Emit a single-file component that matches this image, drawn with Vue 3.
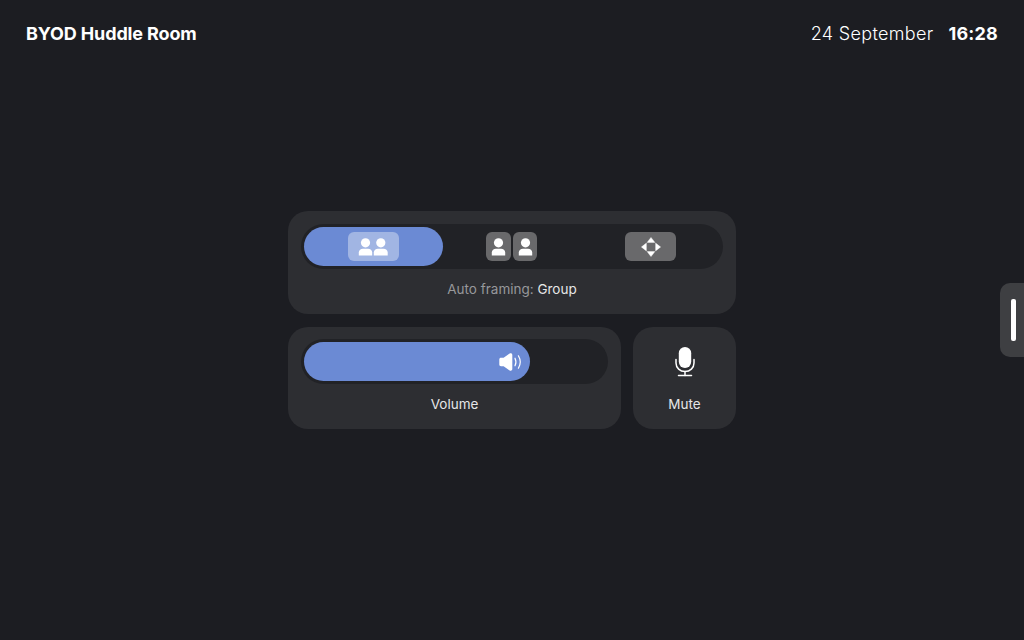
<script setup>
const modes = [
  { id: 'group', active: true },
  { id: 'speakers', active: false },
  { id: 'manual', active: false },
]
const volume = 75
</script>

<template>
  <div class="page">
    <header class="topbar">
      <div class="room">BYOD Huddle Room</div>
      <div class="clock">
        <span class="date">24 September</span>
        <span class="time">16:28</span>
      </div>
    </header>

    <main class="center">
      <div class="panel">
        <section class="card framing">
          <div class="track modes">
            <div v-for="m in modes" :key="m.id" class="mode" :class="{ on: m.active }">
              <div v-if="m.id === 'group'" class="chip wide">
                <svg width="30" height="18" viewBox="0 0 30 18">
                  <g fill="#fff">
                    <circle cx="7.500" cy="4.800" r="4.600" />
                    <path d="M.8 17.500v-3c0-2.300 1.900-3.800 4.200-3.800h5c2.300 0 4.200 1.500 4.200 3.800v3z" />
                    <circle cx="22.800" cy="4.800" r="4.600" />
                    <path d="M15.800 17.500v-3c0-2.300 1.900-3.800 4.200-3.800h5.500c2.300 0 4.200 1.500 4.200 3.800v3z" />
                  </g>
                </svg>
              </div>
              <div v-else-if="m.id === 'speakers'" class="pair">
                <div v-for="n in 2" :key="n" class="chip single">
                  <svg width="15" height="18" viewBox="0 0 15 18">
                    <g fill="#fff">
                      <circle cx="7.500" cy="4.800" r="4.600" />
                      <path d="M.8 17.500v-3c0-2.300 1.900-3.800 4.200-3.800h5c2.300 0 4.200 1.500 4.200 3.800v3z" />
                    </g>
                  </svg>
                </div>
              </div>
              <div v-else class="chip wide">
                <svg width="20" height="20" viewBox="0 0 20 20">
                  <g fill="#fff" stroke="#fff" stroke-width=".4" stroke-linejoin="round">
                    <path d="M10 .4 13.900 5.400H6.100z" />
                    <path d="M10 19.600 6.100 14.600h7.800z" />
                    <path d="M.4 10 5.400 6.100v7.800z" />
                    <path d="M19.600 10 14.600 13.900V6.100z" />
                  </g>
                </svg>
              </div>
            </div>
          </div>
          <div class="label">
            <span class="muted">Auto framing:</span> <span>Group</span>
          </div>
        </section>

        <section class="card volume">
          <div class="track">
            <div class="fill" :style="{ width: volume + '%' }">
              <svg width="24" height="20" viewBox="0 0 24 20">
                <path fill="#fff" d="M.3 7.400c0-1 .7-1.700 1.700-1.700h2.600l6-4.100c1.200-.8 2.700-.2 2.700 1.300v14.200c0 1.500-1.500 2.100-2.700 1.300l-6-4.100H2c-1 0-1.700-.7-1.700-1.700z" />
                <g fill="none" stroke="#fff" stroke-width="1.200" stroke-linecap="round">
                  <path d="M16 6.200c1.200 2.400 1.200 5.200 0 7.600" />
                  <path d="M19.400 3.800c2.300 3.800 2.300 8.600 0 12.400" />
                </g>
              </svg>
            </div>
          </div>
          <div class="label">Volume</div>
        </section>

        <section class="card mute">
          <svg class="mic" width="22" height="30" viewBox="0 0 22 30">
            <rect x="4.800" y="0" width="12.400" height="21" rx="6.200" fill="#fff" />
            <g fill="none" stroke="#fff" stroke-width="1.500" stroke-linecap="round">
              <path d="M2 12.500v3.500c0 5 4 8.500 9 8.500s9-3.500 9-8.500v-3.500" />
              <path d="M11 24.500v4" />
              <path d="M4.500 28.500h13" />
            </g>
          </svg>
          <div class="label">Mute</div>
        </section>
      </div>
    </main>

    <div class="handle"><span class="grip"></span></div>
  </div>
</template>

<style>
html,
body {
  margin: 0;
  background: #1c1d22;
}
</style>

<style scoped>
.page {
  position: relative;
  width: 1024px;
  height: 640px;
  overflow: hidden;
  background: #1c1d22;
  color: #fff;
  font-family: Inter, "Liberation Sans", sans-serif;
  display: grid;
  grid-template-rows: 66px 1fr 66px;
}
.topbar {
  display: flex;
  align-items: center;
  justify-content: space-between;
  padding: 0 26px;
}
.room {
  font-size: 18px;
  font-weight: 700;
  letter-spacing: -0.13px;
}
.clock {
  display: flex;
  gap: 15px;
  font-size: 18px;
}
.date {
  font-weight: 300;
  color: #fff;
  letter-spacing: 0.33px;
}
.time {
  font-weight: 700;
  letter-spacing: 0.2px;
}
.center {
  grid-row: 2;
  display: flex;
  align-items: center;
  justify-content: center;
}
.panel {
  width: 448px;
  display: grid;
  grid-template-columns: 333px 103px;
  grid-template-rows: 103px 102px;
  column-gap: 12px;
  row-gap: 13px;
}
.card {
  background: #2d2e32;
  border-radius: 20px;
  box-sizing: border-box;
  padding: 13px 13px 0;
  display: flex;
  flex-direction: column;
}
.framing {
  grid-column: 1 / 3;
}
.track {
  height: 45px;
  box-sizing: border-box;
  padding: 3px;
  border-radius: 23px;
  background: #212226;
  flex: none;
}
.volume {
  padding-top: 12px;
}
.modes {
  display: grid;
  grid-template-columns: repeat(3, 1fr);
}
.mode {
  display: flex;
  align-items: center;
  justify-content: center;
  border-radius: 20px;
}
.mode.on {
  background: #6b8ad4;
}
.chip {
  height: 29px;
  display: flex;
  align-items: center;
  justify-content: center;
  border-radius: 6px;
  background: #69696b;
}
.chip.wide {
  width: 51px;
}
.mode.on .chip {
  background: #a1b5e3;
}
.pair {
  display: flex;
  gap: 2px;
}
.chip.single {
  width: 24.5px;
}
.label {
  margin-top: 11px;
  text-align: center;
  font-size: 13.5px;
  line-height: 18px;
  color: #e6e6e7;
}
.muted {
  color: #97989b;
}
.fill {
  height: 39px;
  border-radius: 20px;
  background: #6b8ad4;
  box-sizing: border-box;
  display: flex;
  align-items: center;
  justify-content: flex-end;
  padding-right: 7px;
}
.mute {
  align-items: center;
  padding: 20px 0 0;
}
.mic {
  display: block;
}
.mute .label {
  margin-top: 18px;
}
.handle {
  position: absolute;
  right: 0;
  top: 283px;
  width: 24px;
  height: 74px;
  border-radius: 10px 0 0 10px;
  background: #3e3f42;
  display: flex;
  align-items: center;
}
.grip {
  margin-left: 11px;
  width: 5px;
  height: 42px;
  border-radius: 2px;
  background: #fff;
}
</style>
